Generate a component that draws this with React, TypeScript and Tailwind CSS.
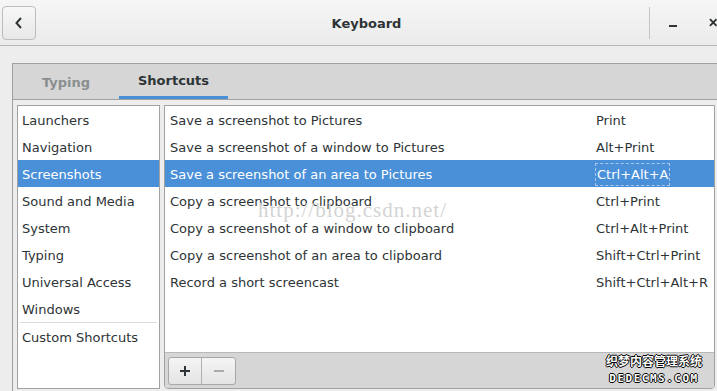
const categories = [
  "Launchers",
  "Navigation",
  "Screenshots",
  "Sound and Media",
  "System",
  "Typing",
  "Universal Access",
  "Windows",
];

const shortcuts = [
  ["Save a screenshot to Pictures", "Print"],
  ["Save a screenshot of a window to Pictures", "Alt+Print"],
  ["Save a screenshot of an area to Pictures", "Ctrl+Alt+A"],
  ["Copy a screenshot to clipboard", "Ctrl+Print"],
  ["Copy a screenshot of a window to clipboard", "Ctrl+Alt+Print"],
  ["Copy a screenshot of an area to clipboard", "Shift+Ctrl+Print"],
  ["Record a short screencast", "Shift+Ctrl+Alt+R"],
];

export default function App() {
  return (
    <div
      className="relative w-[717px] h-[391px] overflow-hidden bg-[#ededed] text-[13px] text-[#2e3436]"
      style={{ fontFamily: '"DejaVu Sans", sans-serif' }}
    >
      {/* Header bar */}
      <div className="flex items-center h-[46px] border-b border-[#b6b6b6] bg-gradient-to-b from-[#f6f6f6] to-[#ebebeb]">
        <button className="ml-[2px] w-[34px] h-[34px] flex items-center justify-center rounded-[4px] border border-[#bdbdbd] bg-gradient-to-b from-[#f7f7f7] to-[#e8e8e8]">
          <svg width="10" height="14" viewBox="0 0 10 14">
            <path d="M7 2 L2.5 7 L7 12" fill="none" stroke="#2e3436" strokeWidth="2" />
          </svg>
        </button>
        <div className="flex-1 pl-[48px] pt-[2px] text-center font-bold text-[#2e3436]">Keyboard</div>
        <div className="w-px h-[32px] bg-[#c4c4c4]" />
        <div className="w-[67px] flex items-center">
          <div className="ml-[19px] mt-[6px] w-[8px] h-[2px] bg-[#2e3436]" />
          <svg className="ml-[32px]" width="9" height="9" viewBox="0 0 9 9">
            <path d="M1 1 L8 8 M8 1 L1 8" stroke="#2e3436" strokeWidth="2" />
          </svg>
        </div>
      </div>

      {/* Notebook */}
      <div className="ml-[12px] mt-[17px] w-[712px] h-[340px] border border-[#a1a1a1] bg-[#ededed]">
        <div className="flex h-[36px] bg-[#d6d6d6] border-b border-[#a1a1a1] font-bold">
          <div className="w-[106px] pt-[2px] flex items-center justify-center text-[#8b8e8f]">Typing</div>
          <div className="w-[109px] flex flex-col">
            <div className="flex-1 pt-[2px] flex items-center justify-center text-[#2e3436]">Shortcuts</div>
            <div className="h-[3px] bg-[#4a90d9]" />
          </div>
        </div>

        <div className="flex gap-[4px] pl-[4px] pt-[5px]">
          {/* Categories */}
          <div className="w-[143px] h-[284px] border border-[#a1a1a1] bg-white">
            {categories.map((c) => (
              <div
                key={c}
                className={
                  c === "Screenshots"
                    ? "h-[27px] flex items-center pl-[4px] pt-[2px] bg-[#4a90d9] text-white"
                    : "h-[27px] flex items-center pl-[4px] pt-[2px]"
                }
              >
                {c}
              </div>
            ))}
            <div className="mx-[2px] h-px bg-[#dcdcdc]" />
            <div className="h-[28px] flex items-center pl-[4px] pt-[2px]">Custom Shortcuts</div>
          </div>

          {/* Shortcut list */}
          <div className="w-[551px] h-[284px] flex flex-col border border-[#a1a1a1] rounded-b-[4px] bg-white overflow-hidden">
            <div className="flex-1">
              {shortcuts.map(([name, key], i) => (
                <div
                  key={name}
                  className={
                    i === 2
                      ? "h-[27px] flex items-center pl-[5px] pt-[2px] bg-[#4a90d9] text-white"
                      : "h-[27px] flex items-center pl-[5px] pt-[2px]"
                  }
                >
                  <span className="w-[426px]">{name}</span>
                  <span className={i === 2 ? "px-px py-[1px] -ml-px border border-dashed border-[#a9c8ec]" : ""}>{key}</span>
                </div>
              ))}
            </div>
            <div className="h-[36px] flex items-center pl-[3px] bg-[#d6d6d6] border-t border-[#b8b8b8]">
              <div className="flex h-[28px] rounded-[3px] border border-[#a8a8a8] bg-gradient-to-b from-[#f4f4f4] to-[#e4e4e4]">
                <div className="w-[33px] flex items-center justify-center border-r border-[#b0b0b0]">
                  <svg width="12" height="12" viewBox="0 0 12 12">
                    <path d="M6 1 V11 M1 6 H11" stroke="#2e3436" strokeWidth="2" />
                  </svg>
                </div>
                <div className="w-[33px] flex items-center justify-center">
                  <svg width="12" height="12" viewBox="0 0 12 12">
                    <path d="M1 6 H11" stroke="#a9abab" strokeWidth="2" />
                  </svg>
                </div>
              </div>
            </div>
          </div>
        </div>
      </div>

      {/* Watermark */}
      <div
        className="absolute left-[258px] top-[195px] text-[21px] tracking-[1px] text-[#d4d4d4] pointer-events-none"
        style={{ fontFamily: '"Liberation Serif", serif' }}
      >
        http://blog.csdn.net/
      </div>
      <div className="absolute left-[606px] top-[355px] flex flex-col items-center leading-none pointer-events-none">
        <div
          className="text-[12px] font-bold text-white"
          style={{
            fontFamily: '"Noto Sans CJK SC", sans-serif',
            textShadow: "1px 0 #000, -1px 0 #000, 0 1px #000, 0 -1px #000",
          }}
        >
          织梦内容管理系统
        </div>
        <div
          className="mt-[6px] text-[11px] font-bold tracking-[1.5px] text-white"
          style={{
            fontFamily: '"DejaVu Sans Mono", monospace',
            textShadow: "1px 0 #000, -1px 0 #000, 0 1px #000, 0 -1px #000",
          }}
        >
          DEDECMS.COM
        </div>
      </div>
    </div>
  );
}
